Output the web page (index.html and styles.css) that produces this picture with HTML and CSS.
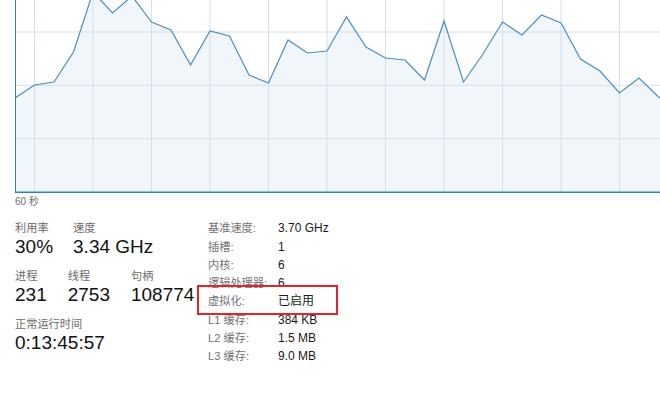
FILE: index.html
```html
<!DOCTYPE html>
<html lang="zh-CN">
<head>
<meta charset="utf-8">
<link rel="stylesheet" href="styles.css">
</head>
<body>
<div class="chart">
  <svg class="graph" width="645" height="194" viewBox="15 0 645 194" xmlns="http://www.w3.org/2000/svg">
    <polygon class="area" points="15,98 34.5,85 54,82 73.5,52 93,-8 112.5,13 132,-4 151.5,22 171,30 190.5,65 210,31 229.5,36 249,75 268.5,83 288,40 307.5,53 327,51 346.5,17 366,47 385.5,58 405,60 424.5,80 444,21 463.5,82 483,54 502.5,22 522,35 541.5,15 561,23 580.5,59 600,71 619.5,93 639,78 658.5,97 678,105 678,192 15,192"/>
    <g class="grid">
      <line x1="15" y1="32" x2="660" y2="32"/>
      <line x1="15" y1="85.3" x2="660" y2="85.3"/>
      <line x1="15" y1="138.7" x2="660" y2="138.7"/>
      <line x1="34.5" y1="0" x2="34.5" y2="192"/>
      <line x1="93" y1="0" x2="93" y2="192"/>
      <line x1="151.5" y1="0" x2="151.5" y2="192"/>
      <line x1="210" y1="0" x2="210" y2="192"/>
      <line x1="268.5" y1="0" x2="268.5" y2="192"/>
      <line x1="327" y1="0" x2="327" y2="192"/>
      <line x1="385.5" y1="0" x2="385.5" y2="192"/>
      <line x1="444" y1="0" x2="444" y2="192"/>
      <line x1="502.5" y1="0" x2="502.5" y2="192"/>
      <line x1="561" y1="0" x2="561" y2="192"/>
      <line x1="619.5" y1="0" x2="619.5" y2="192"/>
    </g>
    <polyline class="trace" points="15,98 34.5,85 54,82 73.5,52 93,-8 112.5,13 132,-4 151.5,22 171,30 190.5,65 210,31 229.5,36 249,75 268.5,83 288,40 307.5,53 327,51 346.5,17 366,47 385.5,58 405,60 424.5,80 444,21 463.5,82 483,54 502.5,22 522,35 541.5,15 561,23 580.5,59 600,71 619.5,93 639,78 658.5,97 678,105"/>
    <line class="frame" x1="15.5" y1="0" x2="15.5" y2="193"/>
    <line class="frame base" x1="15" y1="192.3" x2="660" y2="192.3"/>
  </svg>
</div>
<div class="axis">60 秒</div>
<div class="stats">
  <div class="left">
    <div class="group g1">
      <div class="stat"><div class="lbl">利用率</div><div class="val">30%</div></div>
      <div class="stat"><div class="lbl">速度</div><div class="val">3.34 GHz</div></div>
    </div>
    <div class="group g2">
      <div class="stat"><div class="lbl">进程</div><div class="val">231</div></div>
      <div class="stat"><div class="lbl">线程</div><div class="val">2753</div></div>
      <div class="stat"><div class="lbl">句柄</div><div class="val">108774</div></div>
    </div>
    <div class="group">
      <div class="stat"><div class="lbl">正常运行时间</div><div class="val">0:13:45:57</div></div>
    </div>
  </div>
  <div class="specs">
    <div class="k">基准速度:</div><div class="v">3.70 GHz</div>
    <div class="k">插槽:</div><div class="v">1</div>
    <div class="k">内核:</div><div class="v">6</div>
    <div class="k">逻辑处理器:</div><div class="v">6</div>
    <div class="k">虚拟化:</div><div class="v">已启用</div>
    <div class="k">L1 缓存:</div><div class="v">384 KB</div>
    <div class="k">L2 缓存:</div><div class="v">1.5 MB</div>
    <div class="k">L3 缓存:</div><div class="v">9.0 MB</div>
  </div>
  <div class="highlight"></div>
</div>
</body>
</html>
```
FILE: styles.css
```css
html, body {
  margin: 0;
  padding: 0;
  background: #ffffff;
}
body {
  width: 660px;
  height: 415px;
  overflow: hidden;
  font-family: "Liberation Sans", "Noto Sans CJK SC", sans-serif;
  color: #1a1a1a;
}
.chart {
  height: 194px;
  padding-left: 15px;
}
.graph {
  display: block;
  overflow: hidden;
}
.area {
  fill: #f1f6fa;
  stroke: none;
}
.grid line {
  stroke: #d5e0eb;
  stroke-width: 1;
}
.trace {
  fill: none;
  stroke: #4a8ec0;
  stroke-width: 1.2;
  stroke-linejoin: miter;
}
.frame {
  stroke: #2d84bf;
  stroke-width: 1;
}
.frame.base {
  stroke-width: 1.6;
}
.axis {
  margin-top: 1px;
  padding-left: 15px;
  font-size: 10px;
  line-height: 14px;
  color: #707070;
}
.stats {
  position: relative;
  display: flex;
  align-items: flex-start;
  margin-top: 12px;
  padding-left: 15px;
}
.left {
  width: 193px;
  display: flex;
  flex-direction: column;
  gap: 10.6px;
}
.group {
  display: flex;
  gap: 20px;
}
.group.g2 {
  gap: 21px;
}
.lbl {
  font-size: 11.2px;
  line-height: 14px;
  color: #6a6a6a;
  white-space: nowrap;
}
.val {
  margin-top: 1.4px;
  font-size: 19px;
  line-height: 22px;
  color: #111111;
  white-space: nowrap;
}
.specs {
  margin-top: -1.8px;
  display: grid;
  grid-template-columns: 70px auto;
  line-height: 18.3px;
}
.k {
  font-size: 11.2px;
  color: #727272;
  white-space: nowrap;
}
.v {
  font-size: 12px;
  color: #1a1a1a;
  white-space: nowrap;
}
.highlight {
  position: absolute;
  left: 197px;
  top: 64px;
  width: 137px;
  height: 26px;
  border: 2px solid #e3242b;
}
```
